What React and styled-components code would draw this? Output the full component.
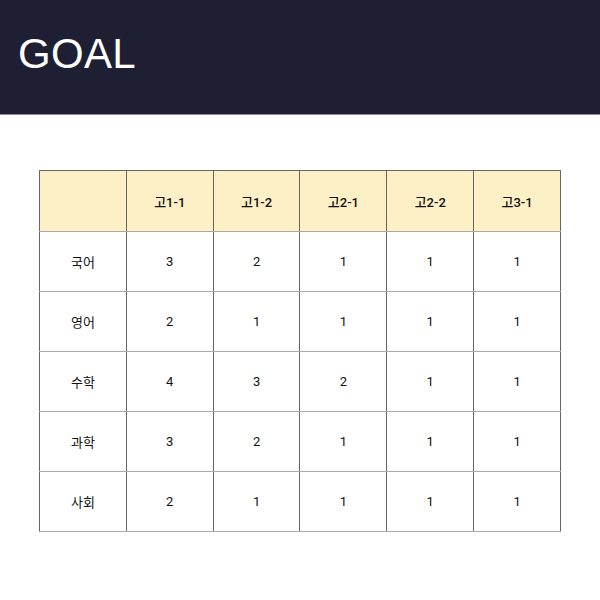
import React from "react";
import styled, { createGlobalStyle } from "styled-components";

const Global = createGlobalStyle`
  html, body { margin: 0; padding: 0; background: #ffffff; }
  body { font-family: Roboto, "Noto Sans CJK KR", sans-serif; }
`;

const Page = styled.div`
  width: 600px;
  min-height: 600px;
  display: flex;
  flex-direction: column;
`;

const Header = styled.header`
  height: 115px;
  background: #1e1f33;
  border-bottom: 1px solid #8d8d95;
  display: flex;
  align-items: center;
  padding-left: 18px;
  box-sizing: border-box;
`;

const Title = styled.h1`
  margin: 0;
  color: #ffffff;
  font-family: "Liberation Sans", Arial, sans-serif;
  font-weight: 400;
  font-size: 42px;
  letter-spacing: 0.3px;
  padding-bottom: 6px;
`;

const Main = styled.main`
  padding: 55px 39px 0 39px;
`;

const Table = styled.table`
  width: 522px;
  border-collapse: collapse;
  table-layout: fixed;
  font-family: Roboto, "Noto Sans CJK KR", sans-serif;
  font-size: 13px;
  color: #111;
`;

const HeadCell = styled.th`
  height: 58px;
  padding: 1px;
  background: #fdefc6;
  border: 1px solid #666;
  border-bottom-color: #aaa;
  font-weight: 500;
  text-align: center;
`;

const Cell = styled.td`
  height: 57px;
  padding: 1px;
  border: 1px solid #666;
  border-top-color: #aaa;
  border-bottom-color: #aaa;
  text-align: center;
  font-weight: 400;
`;

const cols = ["고1-1", "고1-2", "고2-1", "고2-2", "고3-1"];
const rows = [
  ["국어", 3, 2, 1, 1, 1],
  ["영어", 2, 1, 1, 1, 1],
  ["수학", 4, 3, 2, 1, 1],
  ["과학", 3, 2, 1, 1, 1],
  ["사회", 2, 1, 1, 1, 1],
];

export default function App() {
  return (
    <>
      <Global />
      <Page>
        <Header>
          <Title>GOAL</Title>
        </Header>
        <Main>
          <Table>
            <thead>
              <tr>
                <HeadCell />
                {cols.map((c) => (
                  <HeadCell key={c}>{c}</HeadCell>
                ))}
              </tr>
            </thead>
            <tbody>
              {rows.map((r) => (
                <tr key={r[0]}>
                  {r.map((v, i) => (
                    <Cell key={i}>{v}</Cell>
                  ))}
                </tr>
              ))}
            </tbody>
          </Table>
        </Main>
      </Page>
    </>
  );
}
